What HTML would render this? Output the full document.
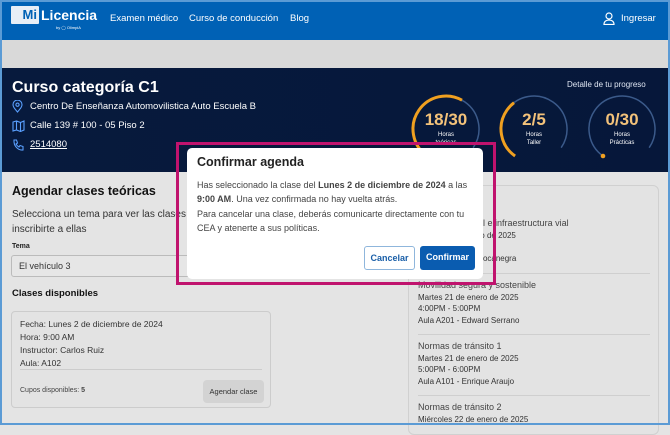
<!DOCTYPE html>
<html><head><meta charset="utf-8"><style>
*{margin:0;padding:0;box-sizing:border-box}
body{width:670px;height:425px;overflow:hidden;font-family:"Liberation Sans",sans-serif;background:#e4e4e4;position:relative}
.frame{position:absolute;inset:0;border:2px solid #5b9bd5;z-index:50;pointer-events:none}
.hdr{position:absolute;left:0;top:0;width:670px;height:40px;background:#0061b5;color:#fff}
.logo{position:absolute;left:11px;top:6px;width:28px;height:18px;background:#e8eef6;border-radius:1px}
.logo b{position:absolute;right:2px;top:2px;font-size:13px;line-height:14px;color:#0061b5;font-weight:bold}
.lic{position:absolute;left:41px;top:7px;font-size:14px;font-weight:bold;color:#fff}
.by{position:absolute;left:56px;top:25px;font-size:4px;color:#fff}
.nav{position:absolute;top:13px;font-size:9.5px;color:#fff}
.gray{position:absolute;left:0;top:40px;width:670px;height:28px;background:#d9d9d9}
.dark{position:absolute;left:0;top:68px;width:670px;height:104px;background:linear-gradient(90deg,#071a3d,#06173a)}
.t1{position:absolute;left:12px;top:79px;font-size:16px;font-weight:bold;color:#fff}
.ln{position:absolute;left:30px;font-size:9.5px;color:#fff}
.ic{position:absolute;left:12px}
.prog{position:absolute;left:567px;top:80px;font-size:8px;color:#dfe6f2}
.circ{position:absolute;top:93px;width:72px;height:72px;text-align:center;color:#f3c27a}
.circ svg{position:absolute;left:0;top:0}
.circ .n{position:absolute;left:0;width:72px;top:17px;font-size:17px;font-weight:bold}
.circ .s{position:absolute;left:0;width:72px;top:38px;font-size:6px;line-height:8px;color:#fff}
.h2{position:absolute;left:12px;top:184px;font-size:12.5px;font-weight:bold;color:#111}
.p{position:absolute;left:12px;top:207px;font-size:10px;line-height:15px;color:#333}
.tema{position:absolute;left:12px;top:243px;font-size:7px;font-weight:bold;color:#222}
.sel{position:absolute;left:11px;top:255px;width:200px;height:22px;border:1px solid #bbb;border-radius:3px;background:#e6e6e6;font-size:9px;padding:5px 7px;color:#333}
.h3{position:absolute;left:12px;top:288px;font-size:9.5px;font-weight:bold;color:#111}
.card{position:absolute;left:11px;top:311px;width:260px;height:97px;border:1px solid #ccc;border-radius:4px;background:#e3e3e3}
.card .l{font-size:8.5px;line-height:13px;color:#333;padding:6px 0 0 8px}
.card hr{position:absolute;left:8px;right:8px;top:57px;border:0;border-top:1px solid #ccc}
.cup{position:absolute;left:8px;top:75px;font-size:7px;color:#444}
.ag{position:absolute;left:191px;top:68px;width:61px;height:23px;background:#d3d3d3;border-radius:4px;font-size:7.5px;color:#333;text-align:center;line-height:23px}
.rc{position:absolute;left:408px;top:185px;width:251px;height:250px;border:1px solid #d0d0d0;border-radius:6px;background:#e3e3e3}
.it{position:absolute;left:418px;font-size:8px;line-height:11.5px;color:#333}
.it b{font-weight:normal;font-size:9px;color:#444}
.sep{position:absolute;left:418px;width:232px;border-top:1px solid #cfcfcf}
.mag{position:absolute;left:176px;top:142px;width:320px;height:143px;border:3px solid #c0136e;z-index:20}
.modal{position:absolute;left:187px;top:148px;width:296px;height:131px;background:#fff;border-radius:5px;z-index:10}
.modal h4{position:absolute;left:10px;top:7px;font-size:12.5px;font-weight:bold;color:#222}
.modal p{position:absolute;left:10px;width:285px;font-size:9px;line-height:13.5px;color:#444}
.btn{position:absolute;top:98px;height:24px;border-radius:3px;font-size:9px;font-weight:bold;text-align:center;line-height:22px}
</style></head><body>
<div class="frame"></div>
<div class="hdr">
 <div class="logo"><b>Mi</b></div>
 <div class="lic">Licencia</div>
 <div class="by">by ◯ OlimpiA</div>
 <div class="nav" style="left:110px">Examen médico</div>
 <div class="nav" style="left:189px">Curso de conducción</div>
 <div class="nav" style="left:290px">Blog</div>
 <svg style="position:absolute;left:603px;top:12px" width="12" height="13" viewBox="0 0 12 13" fill="none" stroke="#fff" stroke-width="1.2"><circle cx="6" cy="4" r="3"/><path d="M1 12.5c0-3 2.2-4.5 5-4.5s5 1.5 5 4.5z"/></svg>
 <div class="nav" style="left:621px">Ingresar</div>
</div>
<div class="gray"></div>
<div class="dark"></div>
<div class="t1">Curso categoría C1</div>
<svg class="ic" style="top:100px" width="11" height="13" viewBox="0 0 11 13" fill="none" stroke="#5aa0ff" stroke-width="1.1"><path d="M5.5 12C2 8 1 6.5 1 4.6A4.5 4.5 0 0110 4.6C10 6.5 9 8 5.5 12z"/><circle cx="5.5" cy="4.7" r="1.6"/></svg>
<div class="ln" style="top:101px">Centro De Enseñanza Automovilistica Auto Escuela B</div>
<svg class="ic" style="top:120px" width="13" height="12" viewBox="0 0 13 12" fill="none" stroke="#5aa0ff" stroke-width="1.1"><path d="M1 2l3.5-1 4 1.5L12 1v9l-3.5 1.5-4-1.5L1 11z M4.5 1v9 M8.5 2.5v9"/></svg>
<div class="ln" style="top:120px">Calle 139 # 100 - 05 Piso 2</div>
<svg class="ic" style="top:139px" width="12" height="12" viewBox="0 0 12 12" fill="none" stroke="#5aa0ff" stroke-width="1.1"><path d="M2 1h2.5l1 3-1.5 1c.8 1.5 1.5 2.2 3 3l1-1.5 3 1V11c-5 .5-9.5-4-9-10z"/></svg>
<div class="ln" style="top:139px;text-decoration:underline">2514080</div>
<div class="prog">Detalle de tu progreso</div>
<div class="circ" style="left:410px"><svg width="72" height="72"><circle cx="36" cy="36" r="33" fill="none" stroke="#3b5a8a" stroke-width="1.5" stroke-dasharray="155 52" transform="rotate(125 36 36)"/><circle cx="36" cy="36" r="33" fill="none" stroke="#f0a020" stroke-width="3" stroke-dasharray="100 200" transform="rotate(125 36 36)"/></svg><div class="n">18/30</div><div class="s">Horas<br>teóricas</div></div>
<div class="circ" style="left:498px"><svg width="72" height="72"><circle cx="36" cy="36" r="33" fill="none" stroke="#3b5a8a" stroke-width="1.5" stroke-dasharray="155 52" transform="rotate(125 36 36)"/><circle cx="36" cy="36" r="33" fill="none" stroke="#f0a020" stroke-width="3" stroke-dasharray="62 200" transform="rotate(125 36 36)"/></svg><div class="n">2/5</div><div class="s">Horas<br>Taller</div></div>
<div class="circ" style="left:586px"><svg width="72" height="72"><circle cx="36" cy="36" r="33" fill="none" stroke="#3b5a8a" stroke-width="1.5" stroke-dasharray="155 52" transform="rotate(125 36 36)"/><circle cx="17" cy="63" r="2.3" fill="#f0a020"/></svg><div class="n">0/30</div><div class="s">Horas<br>Prácticas</div></div>
<div class="h2">Agendar clases teóricas</div>
<div class="p">Selecciona un tema para ver las clases<br>inscribirte a ellas</div>
<div class="tema">Tema</div>
<div class="sel">El vehículo 3</div>
<div class="h3">Clases disponibles</div>
<div class="card"><div class="l">Fecha: Lunes 2 de diciembre de 2024<br>Hora: 9:00 AM<br>Instructor: Carlos Ruiz<br>Aula: A102</div><hr><div class="cup">Cupos disponibles: <b>5</b></div><div class="ag">Agendar clase</div></div>
<div class="rc"></div>
<div class="it" style="top:218px"><b>Señalización vial e infraestructura vial</b><br>Lunes 20 de enero de 2025<br><br>Aula A101 - Ana Bocanegra</div>
<div class="sep" style="top:273px"></div>
<div class="it" style="top:280px"><b>Movilidad segura y sostenible</b><br>Martes 21 de enero de 2025<br>4:00PM - 5:00PM<br>Aula A201 - Edward Serrano</div>
<div class="sep" style="top:334px"></div>
<div class="it" style="top:341px"><b>Normas de tránsito 1</b><br>Martes 21 de enero de 2025<br>5:00PM - 6:00PM<br>Aula A101 - Enrique Araujo</div>
<div class="sep" style="top:395px"></div>
<div class="it" style="top:402px"><b>Normas de tránsito 2</b><br>Miércoles 22 de enero de 2025</div>
<div class="modal">
 <h4>Confirmar agenda</h4>
 <p style="top:31px">Has seleccionado la clase del <b>Lunes 2 de diciembre de 2024</b> a las<br><b>9:00 AM</b>. Una vez confirmada no hay vuelta atrás.</p>
 <p style="top:60px">Para cancelar una clase, deberás comunicarte directamente con tu<br>CEA y atenerte a sus políticas.</p>
 <div class="btn" style="left:177px;width:51px;border:1px solid #8fb6dc;color:#1a5fa8;background:#fff">Cancelar</div>
 <div class="btn" style="left:233px;width:55px;background:#0a5cb0;color:#fff">Confirmar</div>
</div>
<div class="mag"></div>
</body></html>
